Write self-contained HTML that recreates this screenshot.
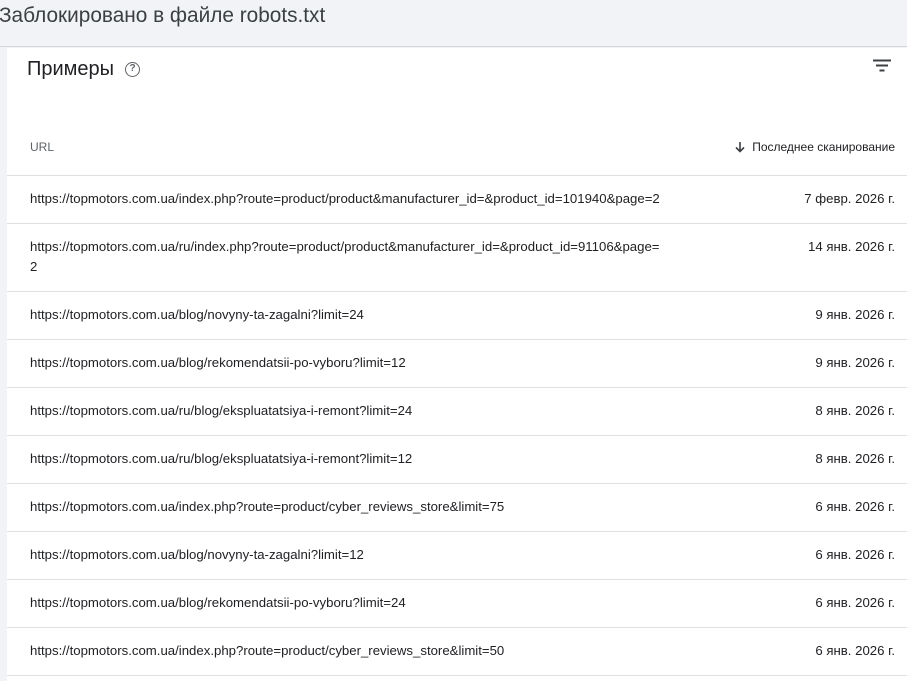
<!DOCTYPE html>
<html><head><meta charset="utf-8"><style>
*{margin:0;padding:0;box-sizing:border-box}
html,body{width:907px;height:681px;overflow:hidden}
body{background:#f1f3f6;font-family:"Liberation Sans",sans-serif;position:relative}
.top{position:absolute;left:0;top:0;width:907px;height:47px;background:#f1f3f6;border-bottom:1px solid #d3d6da}
.top span{position:absolute;left:-1px;top:4px;font-size:20.8px;color:#3c4043}
.card{position:absolute;left:7px;top:48px;width:900px;height:633px;background:#fff;overflow:hidden}
.ttl{position:absolute;left:20px;top:10px;font-size:20px;color:#202124}
.help{position:absolute;left:118px;top:14px;width:15px;height:15px;border:1.5px solid #5f6368;border-radius:50%;font-size:10px;color:#5f6368;text-align:center;line-height:12px;font-weight:bold}
.flt{position:absolute;left:866px;top:11px}
.hd{position:absolute;top:92px;font-size:12px;color:#5f6368}
.row{position:absolute;left:0;width:900px;border-top:1px solid #e0e0e0;font-size:13.2px;color:#202124}
.u{position:absolute;left:23px;top:13px;line-height:20px;width:645px}
.d{position:absolute;right:12px;top:13px;line-height:20px}
</style></head><body>
<div class="top"><span>Заблокировано в файле robots.txt</span></div>
<div class="card">
<div class="ttl">Примеры</div>
<div class="help">?</div>
<svg class="flt" width="18" height="14" viewBox="0 0 18 14"><path d="M0 1.5h18M3 6.5h12M6.5 11.5h5" stroke="#3c4043" stroke-width="2"/></svg>
<div class="hd" style="left:23px">URL</div>
<div class="hd" style="right:12px;color:#202124;font-size:12px">
<svg width="12" height="12" viewBox="0 0 12 12" style="vertical-align:-2px;margin-right:6px"><path d="M6 1v9M2 6.5l4 4 4-4" stroke="#3c4043" stroke-width="1.6" fill="none"/></svg>Последнее сканирование</div>
<div class="row" style="top:127px;height:48px"><div class="u">https://topmotors.com.ua/index.php?route=product/product&amp;manufacturer_id=&amp;product_id=101940&amp;page=2</div><div class="d">7 февр. 2026 г.</div></div>
<div class="row" style="top:175px;height:68px"><div class="u">https://topmotors.com.ua/ru/index.php?route=product/product&amp;manufacturer_id=&amp;product_id=91106&amp;page=<br>2</div><div class="d">14 янв. 2026 г.</div></div>
<div class="row" style="top:243px;height:48px"><div class="u">https://topmotors.com.ua/blog/novyny-ta-zagalni?limit=24</div><div class="d">9 янв. 2026 г.</div></div>
<div class="row" style="top:291px;height:48px"><div class="u">https://topmotors.com.ua/blog/rekomendatsii-po-vyboru?limit=12</div><div class="d">9 янв. 2026 г.</div></div>
<div class="row" style="top:339px;height:48px"><div class="u">https://topmotors.com.ua/ru/blog/ekspluatatsiya-i-remont?limit=24</div><div class="d">8 янв. 2026 г.</div></div>
<div class="row" style="top:387px;height:48px"><div class="u">https://topmotors.com.ua/ru/blog/ekspluatatsiya-i-remont?limit=12</div><div class="d">8 янв. 2026 г.</div></div>
<div class="row" style="top:435px;height:48px"><div class="u">https://topmotors.com.ua/index.php?route=product/cyber_reviews_store&amp;limit=75</div><div class="d">6 янв. 2026 г.</div></div>
<div class="row" style="top:483px;height:48px"><div class="u">https://topmotors.com.ua/blog/novyny-ta-zagalni?limit=12</div><div class="d">6 янв. 2026 г.</div></div>
<div class="row" style="top:531px;height:48px"><div class="u">https://topmotors.com.ua/blog/rekomendatsii-po-vyboru?limit=24</div><div class="d">6 янв. 2026 г.</div></div>
<div class="row" style="top:579px;height:48px"><div class="u">https://topmotors.com.ua/index.php?route=product/cyber_reviews_store&amp;limit=50</div><div class="d">6 янв. 2026 г.</div></div>
<div class="row" style="top:627px;height:6px"></div>
</div>
</body></html>
